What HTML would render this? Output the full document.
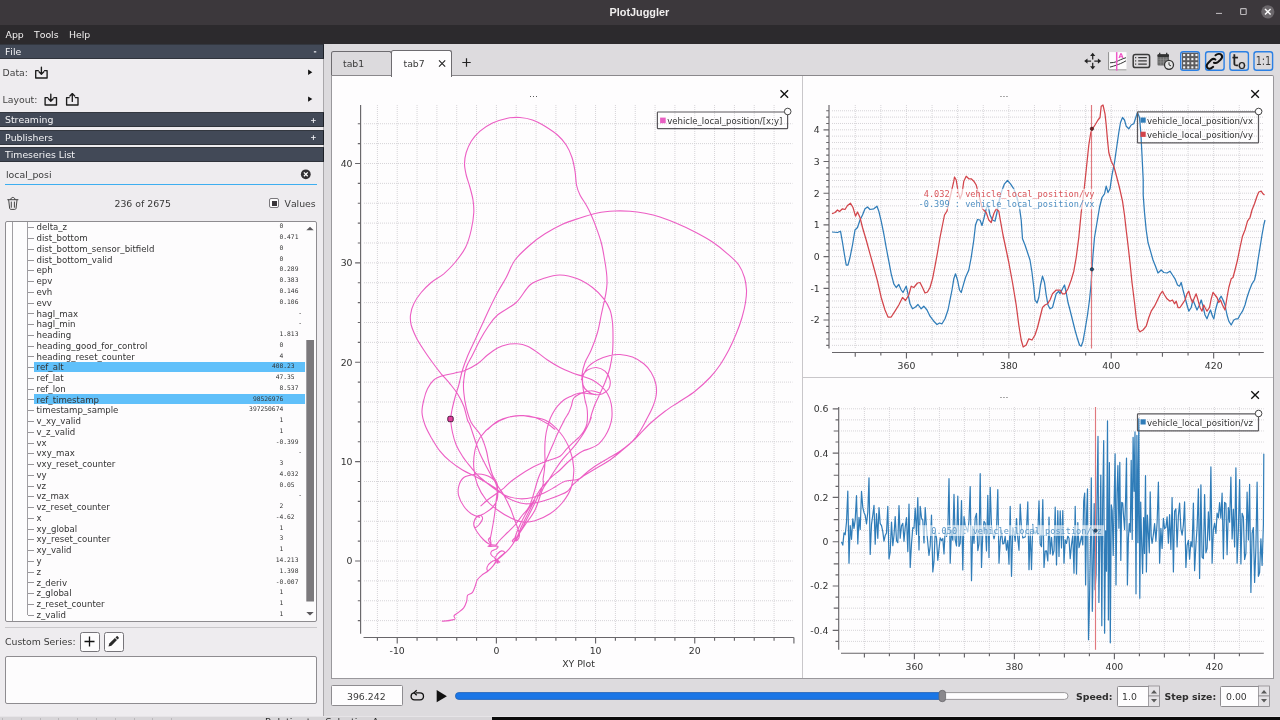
<!DOCTYPE html>
<html lang="en"><head><meta charset="utf-8"><title>PlotJuggler</title>
<style>
html,body{margin:0;padding:0;}
body{width:1280px;height:720px;overflow:hidden;position:relative;background:#eeecef;
 font-family:"DejaVu Sans","Liberation Sans",sans-serif;font-size:9.33px;color:#333;line-height:1;font-kerning:none;}
div,span{box-sizing:border-box;}
.abs{position:absolute;}
#titlebar{position:absolute;left:0;top:0;width:1280px;height:25px;background:#3c383c;}
#title{position:absolute;left:539.400px;width:200px;top:7px;text-align:center;color:#f1efef;font-weight:bold;font-size:10.900px;font-family:"Liberation Sans","DejaVu Sans",sans-serif;}
#menubar{position:absolute;left:0;top:25px;width:1280px;height:18.5px;background:#2c2a2d;color:#f2f0f0;}
#menubar span{position:absolute;top:4.6px;font-size:9.33px;}
.hdr{position:absolute;left:0;width:323.600px;height:15px;background:#424957;border-top:1px solid #33373f;border-bottom:1px solid #2f333b;border-right:1.200px solid #1d2026;color:#f4f4f6;}
.hdr span{position:absolute;left:5px;top:2px;font-size:9.33px;}
.hdr b{position:absolute;right:6px;top:3.500px;font-weight:bold;font-size:7.500px;color:#f4f4f8;}
.lbl{position:absolute;font-size:9.33px;color:#444;white-space:nowrap;}
#leftpanel{position:absolute;left:0;top:43.5px;width:324px;height:673px;background:#eeecef;border-right:1px solid #a9a7aa;}
#splitter{position:absolute;left:324px;top:43.5px;width:7.500px;height:673px;background:#dcdadd;}
#tree{position:absolute;left:5px;top:221px;width:311.5px;height:400.5px;background:#fdfcfd;border:1px solid #8e8c90;border-radius:2px;}
.tl{position:absolute;left:36.5px;height:10.75px;line-height:10.75px;font-size:8.6px;color:#333;white-space:nowrap;}
.tv{position:absolute;height:10.75px;line-height:8.600px;font-size:6.300px;font-family:"DejaVu Sans Mono","Liberation Mono",monospace;color:#333;white-space:pre;}
.br{position:absolute;left:27.500px;width:6.300px;height:1px;background:#98969a;}
.sel{position:absolute;left:34px;width:270.5px;height:10.100px;background:#60c0fa;}
#custom{position:absolute;left:5px;top:655.800px;width:311.5px;height:48.5px;background:#fdfcfd;border:1px solid #8e8c90;border-radius:2px;}
.btn{position:absolute;width:20px;height:20px;background:#fdfcfd;border:1px solid #77757a;border-radius:2.5px;}
svg{position:absolute;overflow:visible;}
svg text{font-kerning:none;font-family:"DejaVu Sans","Liberation Sans",sans-serif;}
#right{position:absolute;left:331.5px;top:43.5px;width:948.5px;height:673px;background:#dddbde;}
#plotframe{position:absolute;left:331px;top:75px;width:943px;height:604px;border-radius:0 2px 0 0;background:#fefdfe;border:1px solid #9a989c;border-top-color:#8a888c;}
.tab{position:absolute;font-size:9.33px;color:#3a3a3a;}
#root{position:absolute;left:0;top:0;width:1280px;height:720px;will-change:transform;}

</style></head>
<body><div id="root">
<div id="titlebar">
 <div id="title">PlotJuggler</div>
 <svg style="left:1200px;top:0" width="80" height="25" viewBox="0 0 80 25">
  <path d="M16 13.400h6" stroke="#d2cfd2" stroke-width="0.900" fill="none"/>
  <rect x="40.600" y="8.700" width="5.600" height="5.800" rx="0.800" stroke="#b9b6b9" stroke-width="1.200" fill="none"/>
  <circle cx="67.800" cy="11.800" r="6.600" fill="#6b676b"/>
  <path d="M65 9l5.600 5.600M70.600 9l-5.600 5.600" stroke="#fff" stroke-width="1.400" fill="none"/>
 </svg>
</div>
<div id="menubar"><span style="left:5.5px">App</span><span style="left:34px">Tools</span><span style="left:69px">Help</span></div>

<div id="leftpanel"></div>
<div id="splitter"></div>
<div class="hdr" style="top:43.5px"><span>File</span><b>-</b></div>
<div class="lbl" style="left:2.5px;top:67.5px">Data:</div>
<div class="lbl" style="left:2.5px;top:94.5px">Layout:</div>
<svg style="left:0;top:43px" width="330" height="80" viewBox="0 43 330 80" fill="none" stroke="#1c1c1c" stroke-width="1.350" stroke-linecap="round" stroke-linejoin="round">
 <!-- data import icon -->
 <path d="M38.3 70.6h-2.6v7.4h11.4v-7.4h-2.6"/><path d="M41.4 67.2v6.8M39 71.8l2.4 2.4 2.4-2.4"/>
 <!-- layout import -->
 <path d="M47.7 97.6h-2.6v7.4h11.4v-7.4h-2.6"/><path d="M50.8 94.2v6.8M48.4 98.8l2.4 2.4 2.4-2.4"/>
 <!-- layout export -->
 <path d="M69.2 97.6h-2.6v7.4h11.4v-7.4h-2.6"/><path d="M72.3 101.4v-7.6M69.9 96l2.4-2.4 2.4 2.4"/>
 <!-- arrows -->
 <path d="M308.100 69.500v5.400l4.200-2.700z" fill="#111" stroke="none"/>
 <path d="M308.100 96.400v5.400l4.200-2.700z" fill="#111" stroke="none"/>
</svg>
<div class="hdr" style="top:112.2px"><span>Streaming</span><b>+</b></div>
<div class="hdr" style="top:129.5px"><span>Publishers</span><b>+</b></div>
<div class="hdr" style="top:146.8px"><span>Timeseries List</span></div>
<div class="lbl" style="left:6px;top:169.5px;color:#3a3a3a">local_posi</div>
<div class="abs" style="left:5px;top:183.7px;width:311.5px;height:1.4px;background:#3daef0"></div>
<svg style="left:298px;top:167px" width="16" height="16" viewBox="0 0 16 16">
 <circle cx="7.8" cy="7.3" r="4.9" fill="#322f32"/><path d="M5.9 5.4l3.8 3.8M9.7 5.4l-3.8 3.8" stroke="#fff" stroke-width="1.3"/>
</svg>
<svg style="left:0px;top:190px" width="24" height="24" viewBox="0 190 24 24" fill="none" stroke="#3c3c3c" stroke-width="0.950" stroke-linecap="round">
 <path d="M7.700 199.700h10.300M10.700 199.500c0-2.900 4.300-2.900 4.300 0M8.700 200l.9 8c.1 1 .6 1.400 1.500 1.400h3.500c.9 0 1.400-.4 1.500-1.400l.9-8M11.300 202v5.300M14.400 202v5.300"/>
</svg>
<div class="lbl" style="left:114.5px;top:198.5px;color:#3a3a3a">236 of 2675</div>
<div class="abs" style="left:269px;top:198px;width:10.400px;height:10.400px;border:1px solid #7a787c;border-radius:2px;background:#fdfcfd"></div>
<div class="abs" style="left:272px;top:201px;width:5px;height:5px;background:#3a363a"></div>
<div class="lbl" style="left:284.500px;top:198.500px;color:#3a3a3a">Values</div>
<div id="tree"></div>
<div class="abs" style="left:11.900px;top:222px;width:1.300px;height:399px;background:#a09ea2"></div>
<div class="abs" style="left:26.600px;top:222px;width:1.300px;height:392.500px;background:#a09ea2"></div>
<div class="br" style="top:227.30px"></div>
<div class="tl" style="top:222.42px">delta_z</div>
<div class="tv" style="top:222.42px;left:279.50px">0</div>
<div class="br" style="top:238.06px"></div>
<div class="tl" style="top:233.18px">dist_bottom</div>
<div class="tv" style="top:233.18px;left:279.50px">0.471</div>
<div class="br" style="top:248.82px"></div>
<div class="tl" style="top:243.94px">dist_bottom_sensor_bitfield</div>
<div class="tv" style="top:243.94px;left:279.50px">0</div>
<div class="br" style="top:259.58px"></div>
<div class="tl" style="top:254.70px">dist_bottom_valid</div>
<div class="tv" style="top:254.70px;left:279.50px">0</div>
<div class="br" style="top:270.34px"></div>
<div class="tl" style="top:265.46px">eph</div>
<div class="tv" style="top:265.46px;left:279.50px">0.289</div>
<div class="br" style="top:281.10px"></div>
<div class="tl" style="top:276.22px">epv</div>
<div class="tv" style="top:276.22px;left:279.50px">0.383</div>
<div class="br" style="top:291.86px"></div>
<div class="tl" style="top:286.98px">evh</div>
<div class="tv" style="top:286.98px;left:279.50px">0.146</div>
<div class="br" style="top:302.62px"></div>
<div class="tl" style="top:297.74px">evv</div>
<div class="tv" style="top:297.74px;left:279.50px">0.106</div>
<div class="br" style="top:313.38px"></div>
<div class="tl" style="top:308.50px">hagl_max</div>
<div class="tv" style="top:308.50px;left:298.20px">-</div>
<div class="br" style="top:324.14px"></div>
<div class="tl" style="top:319.26px">hagl_min</div>
<div class="tv" style="top:319.26px;left:298.20px">-</div>
<div class="br" style="top:334.90px"></div>
<div class="tl" style="top:330.02px">heading</div>
<div class="tv" style="top:330.02px;left:279.50px">1.813</div>
<div class="br" style="top:345.66px"></div>
<div class="tl" style="top:340.78px">heading_good_for_control</div>
<div class="tv" style="top:340.78px;left:279.50px">0</div>
<div class="br" style="top:356.42px"></div>
<div class="tl" style="top:351.54px">heading_reset_counter</div>
<div class="tv" style="top:351.54px;left:279.50px">4</div>
<div class="sel" style="top:361.75px"></div>
<div class="br" style="top:367.18px"></div>
<div class="tl" style="top:362.30px">ref_alt</div>
<div class="tv" style="top:362.30px;left:271.90px">408.23</div>
<div class="br" style="top:377.94px"></div>
<div class="tl" style="top:373.06px">ref_lat</div>
<div class="tv" style="top:373.06px;left:275.70px">47.35</div>
<div class="br" style="top:388.70px"></div>
<div class="tl" style="top:383.82px">ref_lon</div>
<div class="tv" style="top:383.82px;left:279.50px">8.537</div>
<div class="sel" style="top:394.03px"></div>
<div class="br" style="top:399.46px"></div>
<div class="tl" style="top:394.58px">ref_timestamp</div>
<div class="tv" style="top:394.58px;left:252.90px">98526976</div>
<div class="br" style="top:410.22px"></div>
<div class="tl" style="top:405.34px">timestamp_sample</div>
<div class="tv" style="top:405.34px;left:249.10px">397250674</div>
<div class="br" style="top:420.98px"></div>
<div class="tl" style="top:416.10px">v_xy_valid</div>
<div class="tv" style="top:416.10px;left:279.50px">1</div>
<div class="br" style="top:431.74px"></div>
<div class="tl" style="top:426.86px">v_z_valid</div>
<div class="tv" style="top:426.86px;left:279.50px">1</div>
<div class="br" style="top:442.50px"></div>
<div class="tl" style="top:437.62px">vx</div>
<div class="tv" style="top:437.62px;left:275.70px">-0.399</div>
<div class="br" style="top:453.26px"></div>
<div class="tl" style="top:448.38px">vxy_max</div>
<div class="tv" style="top:448.38px;left:298.20px">-</div>
<div class="br" style="top:464.02px"></div>
<div class="tl" style="top:459.14px">vxy_reset_counter</div>
<div class="tv" style="top:459.14px;left:279.50px">3</div>
<div class="br" style="top:474.78px"></div>
<div class="tl" style="top:469.90px">vy</div>
<div class="tv" style="top:469.90px;left:279.50px">4.032</div>
<div class="br" style="top:485.54px"></div>
<div class="tl" style="top:480.66px">vz</div>
<div class="tv" style="top:480.66px;left:279.50px">0.05</div>
<div class="br" style="top:496.30px"></div>
<div class="tl" style="top:491.42px">vz_max</div>
<div class="tv" style="top:491.42px;left:298.20px">-</div>
<div class="br" style="top:507.06px"></div>
<div class="tl" style="top:502.18px">vz_reset_counter</div>
<div class="tv" style="top:502.18px;left:279.50px">2</div>
<div class="br" style="top:517.82px"></div>
<div class="tl" style="top:512.94px">x</div>
<div class="tv" style="top:512.94px;left:275.70px">-4.62</div>
<div class="br" style="top:528.58px"></div>
<div class="tl" style="top:523.70px">xy_global</div>
<div class="tv" style="top:523.70px;left:279.50px">1</div>
<div class="br" style="top:539.34px"></div>
<div class="tl" style="top:534.46px">xy_reset_counter</div>
<div class="tv" style="top:534.46px;left:279.50px">3</div>
<div class="br" style="top:550.10px"></div>
<div class="tl" style="top:545.22px">xy_valid</div>
<div class="tv" style="top:545.22px;left:279.50px">1</div>
<div class="br" style="top:560.86px"></div>
<div class="tl" style="top:555.98px">y</div>
<div class="tv" style="top:555.98px;left:275.70px">14.213</div>
<div class="br" style="top:571.62px"></div>
<div class="tl" style="top:566.74px">z</div>
<div class="tv" style="top:566.74px;left:279.50px">1.398</div>
<div class="br" style="top:582.38px"></div>
<div class="tl" style="top:577.50px">z_deriv</div>
<div class="tv" style="top:577.50px;left:275.70px">-0.007</div>
<div class="br" style="top:593.14px"></div>
<div class="tl" style="top:588.26px">z_global</div>
<div class="tv" style="top:588.26px;left:279.50px">1</div>
<div class="br" style="top:603.90px"></div>
<div class="tl" style="top:599.02px">z_reset_counter</div>
<div class="tv" style="top:599.02px;left:279.50px">1</div>
<div class="br" style="top:614.66px"></div>
<div class="tl" style="top:609.78px">z_valid</div>
<div class="tv" style="top:609.78px;left:279.50px">1</div>
<!-- scrollbar -->
<svg style="left:304px;top:222px" width="12" height="399" viewBox="304 222 12 399">
 <path d="M306.300 230.300h7.400l-3.700-3.600z" fill="#5a585c"/>
 <rect x="306.300" y="340" width="7.700" height="261.500" fill="#7b797c"/>
 <path d="M306.300 612h7.400l-3.700 3.600z" fill="#5a585c"/>
</svg>
<div class="abs" style="left:5px;top:626.500px;width:311.500px;height:1px;background:#c9c7ca"></div>
<div class="lbl" style="left:5px;top:637px;color:#3a3a3a">Custom Series:</div>
<div class="btn" style="left:79.500px;top:631.500px"></div>
<div class="btn" style="left:103.500px;top:631.500px"></div>
<svg style="left:79px;top:631px" width="46" height="21" viewBox="79 631 46 21">
 <path d="M84.500 641.500h10M89.500 636.500v10" stroke="#111" stroke-width="1.300" fill="none"/>
 <path d="M108.500 646.500l.8-2.900 5.600-5.600 2.100 2.100-5.600 5.600z" fill="#2a2a2a"/><path d="M115.500 637.400l1-1c.4-.4.900-.4 1.300 0l.8.800c.4.400.4.900 0 1.300l-1 1z" fill="#2a2a2a"/>
</svg>
<div id="custom"></div>

<div id="right"></div>
<!-- tabs -->
<div class="abs" style="left:331px;top:50.600px;width:60.500px;height:25.400px;background:#dcdadd;border:1px solid #6e6c70;border-bottom:none;border-radius:2.500px 2.500px 0 0"></div>
<div id="plotframe"></div>
<div class="abs" style="left:391px;top:50.200px;width:61px;height:27px;background:#fefdfe;border:1px solid #6e6c70;border-bottom:none;border-radius:2.500px 2.500px 0 0"></div>
<div class="tab" style="left:343px;top:58.800px">tab1</div>
<div class="tab" style="left:403.500px;top:58.800px">tab7</div>
<svg style="left:430px;top:50px" width="50" height="26" viewBox="430 50 50 26" fill="none" stroke="#222" stroke-width="1.100">
 <path d="M439 60.400l6.200 6.200M445.200 60.400l-6.200 6.200"/>
 <path d="M462.300 62.500h8.400M466.500 58.300v8.400" stroke-width="1.200"/>
</svg>
<!-- toolbar -->
<svg style="left:1080px;top:48px" width="200" height="26" viewBox="1080 48 200 26">
 <!-- move -->
 <g stroke="#2a2a2a" stroke-width="1.300" fill="none">
  <path d="M1086.500 61.100h4.600M1094.300 61.100h4.600M1092.700 55v4.600M1092.700 62.700v4.600"/>
 </g>
 <path d="M1084.200 61.100l3.300-2.600v5.200zM1101.200 61.100l-3.300-2.600v5.200zM1092.700 52.800l-2.600 3.300h5.200zM1092.700 69.500l-2.600-3.300h5.200z" fill="#222"/>
 <!-- chart icon -->
 <rect x="1108.100" y="52.100" width="18.400" height="18.500" fill="#fdfdfd"/>
 <path d="M1108.600 52.100v17.800h17.900" stroke="#8a8a8a" stroke-width="1" fill="none"/>
 <path d="M1110 62.800c3-.2 4.500-.3 6.500-1.200s5.500-2.700 9.500-3.900M1110 67.100c3-.8 4.500-1.300 6.500-2s5.500-1.900 9.500-4.300" stroke="#333" stroke-width="1" fill="none"/>
 <path d="M1116.700 52.100v18.500" stroke="#ee5ac8" stroke-width="1.500"/>
 <text x="1118.600" y="57.500" font-size="6.500" font-weight="bold" fill="#ee4fc4">A</text>
 <!-- list icon -->
 <rect x="1133.200" y="54.500" width="16.400" height="13.100" rx="2.200" fill="none" stroke="#3a3a3a" stroke-width="1.500"/>
 <path d="M1135.100 57.700h1.100M1138.200 57.700h8.600M1135.100 60.900h1.100M1138.200 60.900h8.600M1135.100 64.100h1.100M1138.200 64.100h8.600" stroke="#3a3a3a" stroke-width="1.300"/>
 <!-- calendar clock -->
 <rect x="1157.500" y="54.200" width="11.500" height="11.300" rx="1" fill="#6a6a6a"/>
 <rect x="1157.500" y="54.200" width="11.500" height="2.800" rx="1" fill="#333"/>
 <path d="M1159.700 52.800v2.500M1166.700 52.800v2.500" stroke="#333" stroke-width="1.300"/>
 <path d="M1158.300 59.300h9.800M1158.300 62h9.800M1160.800 57.300v7.800M1163.500 57.300v7.800M1166.200 57.300v7.800" stroke="#999" stroke-width="0.600"/>
 <circle cx="1169" cy="64.800" r="4.500" fill="#e6e6e6" stroke="#333" stroke-width="1.300"/>
 <path d="M1169 62.300v2.600l2 1" stroke="#333" stroke-width="1" fill="none"/>
 <!-- toggle buttons -->
 <g fill="#dbd9dc" stroke="#2b80e4" stroke-width="1.400">
  <rect x="1180.700" y="51.700" width="18.700" height="18.600" rx="2.500"/>
  <rect x="1205.600" y="51.700" width="18.500" height="18.600" rx="2.500"/>
  <rect x="1229.900" y="51.700" width="18.500" height="18.600" rx="2.500"/>
  <rect x="1254" y="51.700" width="18.600" height="18.600" rx="2.500"/>
 </g>
 <!-- grid -->
 <rect x="1182" y="52.800" width="16.400" height="16.400" fill="#5c5c5e"/>
 <g fill="#f4f4f4">
  <rect x="1183.100" y="54" width="2.100" height="2.100"/><rect x="1187.200" y="54" width="2.100" height="2.100"/><rect x="1191.300" y="54" width="2.100" height="2.100"/><rect x="1195.400" y="54" width="2.100" height="2.100"/>
  <rect x="1183.100" y="58.100" width="2.100" height="2.100"/><rect x="1187.200" y="58.100" width="2.100" height="2.100"/><rect x="1191.300" y="58.100" width="2.100" height="2.100"/><rect x="1195.400" y="58.100" width="2.100" height="2.100"/>
  <rect x="1183.100" y="62.200" width="2.100" height="2.100"/><rect x="1187.200" y="62.200" width="2.100" height="2.100"/><rect x="1191.300" y="62.200" width="2.100" height="2.100"/><rect x="1195.400" y="62.200" width="2.100" height="2.100"/>
  <rect x="1183.100" y="66.300" width="2.100" height="2.100"/><rect x="1187.200" y="66.300" width="2.100" height="2.100"/><rect x="1191.300" y="66.300" width="2.100" height="2.100"/><rect x="1195.400" y="66.300" width="2.100" height="2.100"/>
 </g>
 <!-- link -->
 <g stroke="#111" stroke-width="2" fill="none" stroke-linecap="round">
  <path d="M1215.500 55.300C1217 54.200 1220 53.300 1221.500 55C1223 56.700 1222 58.300 1220.500 59.800L1218 62C1216.800 63 1215.300 63.200 1213.900 62.700"/>
  <path d="M1215.400 59.500C1214 58.600 1212.500 58.800 1211.300 59.800L1208.200 63C1206.700 64.600 1206.200 66.600 1207.600 68C1209.200 69.500 1211.500 68.300 1213.200 66.800"/>
 </g>
 <!-- t0 -->
 <text x="1232.300" y="65.500" font-size="15.300" fill="#222" stroke="#222" stroke-width="0.300">t</text>
 <text x="1238" y="68.600" font-size="12.800" fill="#222" stroke="#222" stroke-width="0.200">o</text>
 <!-- 1:1 -->
 <text x="1255.700" y="65.200" font-size="11.800" fill="#3a3a3a" textLength="15.600" lengthAdjust="spacingAndGlyphs">1:1</text>
</svg>
<!-- plot separators -->
<div class="abs" style="left:802px;top:76px;width:1px;height:602px;background:#c9c7ca"></div>
<div class="abs" style="left:803px;top:377px;width:470px;height:1px;background:#c9c7ca"></div>
<svg id="xy" style="left:0;top:0" width="803" height="680" viewBox="0 0 803 680">
<path d="M377.40 105.0V633.5M397.23 105.0V633.5M417.06 105.0V633.5M436.90 105.0V633.5M456.73 105.0V633.5M476.57 105.0V633.5M496.40 105.0V633.5M516.23 105.0V633.5M536.07 105.0V633.5M555.90 105.0V633.5M575.74 105.0V633.5M595.57 105.0V633.5M615.40 105.0V633.5M635.24 105.0V633.5M655.07 105.0V633.5M674.91 105.0V633.5M694.74 105.0V633.5M714.57 105.0V633.5M734.41 105.0V633.5M754.24 105.0V633.5M774.08 105.0V633.5M364.0 620.63H792.5M364.0 600.75H792.5M364.0 580.88H792.5M364.0 561.00H792.5M364.0 541.12H792.5M364.0 521.25H792.5M364.0 501.37H792.5M364.0 481.50H792.5M364.0 461.62H792.5M364.0 441.74H792.5M364.0 421.87H792.5M364.0 401.99H792.5M364.0 382.12H792.5M364.0 362.24H792.5M364.0 342.36H792.5M364.0 322.49H792.5M364.0 302.61H792.5M364.0 282.74H792.5M364.0 262.86H792.5M364.0 242.98H792.5M364.0 223.11H792.5M364.0 203.23H792.5M364.0 183.36H792.5M364.0 163.48H792.5M364.0 143.60H792.5M364.0 123.73H792.5" stroke="#d6d4d8" stroke-width="1" stroke-dasharray="1 1" fill="none"/>
<path d="M360.6 105.0V633.8M363.5 637.5H793.8M377.40 637.5v3.2M397.23 637.5v6M417.06 637.5v3.2M436.90 637.5v3.2M456.73 637.5v3.2M476.57 637.5v3.2M496.40 637.5v6M516.23 637.5v3.2M536.07 637.5v3.2M555.90 637.5v3.2M575.74 637.5v3.2M595.57 637.5v6M615.40 637.5v3.2M635.24 637.5v3.2M655.07 637.5v3.2M674.91 637.5v3.2M694.74 637.5v6M714.57 637.5v3.2M734.41 637.5v3.2M754.24 637.5v3.2M774.08 637.5v3.2M793.91 637.5v6M360.6 620.63h-2.8M360.6 600.75h-2.8M360.6 580.88h-2.8M360.6 561.00h-5.5M360.6 541.12h-2.8M360.6 521.25h-2.8M360.6 501.37h-2.8M360.6 481.50h-2.8M360.6 461.62h-5.5M360.6 441.74h-2.8M360.6 421.87h-2.8M360.6 401.99h-2.8M360.6 382.12h-2.8M360.6 362.24h-5.5M360.6 342.36h-2.8M360.6 322.49h-2.8M360.6 302.61h-2.8M360.6 282.74h-2.8M360.6 262.86h-5.5M360.6 242.98h-2.8M360.6 223.11h-2.8M360.6 203.23h-2.8M360.6 183.36h-2.8M360.6 163.48h-5.5M360.6 143.60h-2.8M360.6 123.73h-2.8" stroke="#68666a" stroke-width="1.15" fill="none"/>
<text x="397.2" y="654.3" font-size="9.33" text-anchor="middle" fill="#333">-10</text>
<text x="496.4" y="654.3" font-size="9.33" text-anchor="middle" fill="#333">0</text>
<text x="595.6" y="654.3" font-size="9.33" text-anchor="middle" fill="#333">10</text>
<text x="694.7" y="654.3" font-size="9.33" text-anchor="middle" fill="#333">20</text>
<text x="352.5" y="564.4" font-size="9.33" text-anchor="end" fill="#333">0</text>
<text x="352.5" y="465.0" font-size="9.33" text-anchor="end" fill="#333">10</text>
<text x="352.5" y="365.6" font-size="9.33" text-anchor="end" fill="#333">20</text>
<text x="352.5" y="266.3" font-size="9.33" text-anchor="end" fill="#333">30</text>
<text x="352.5" y="166.9" font-size="9.33" text-anchor="end" fill="#333">40</text>
<text x="578.5" y="667.3" font-size="9.33" text-anchor="middle" fill="#333">XY Plot</text>
<text x="533.500" y="97.100" font-size="9.33" text-anchor="middle" fill="#555">...</text>
<path d="M581.2 380.0C582.3 377.9 584.8 370.8 587.5 367.5C590.2 364.2 593.8 362.0 597.5 360.0C601.2 358.0 606.2 356.4 610.0 355.5C613.8 354.6 616.2 354.2 620.0 354.5C623.8 354.8 628.5 355.5 632.5 357.0C636.5 358.5 640.6 361.2 643.8 363.8C646.9 366.3 649.2 369.2 651.2 372.5C653.2 375.8 654.9 380.0 655.8 383.8C656.6 387.5 656.8 391.0 656.2 395.0C655.7 399.0 654.2 403.3 652.5 407.5C650.8 411.7 648.3 416.0 646.2 420.0C644.2 424.0 642.3 427.7 640.0 431.2C637.7 434.8 635.4 438.1 632.5 441.2C629.6 444.4 626.2 446.9 622.5 450.0C618.8 453.1 614.2 457.1 610.0 460.0C605.8 462.9 601.7 465.0 597.5 467.5C593.3 470.0 588.3 473.0 585.0 475.0C581.7 477.0 580.8 478.5 577.5 479.5C574.2 480.5 568.8 480.0 565.0 481.2C561.2 482.5 558.3 485.1 555.0 487.0C551.7 488.9 548.8 490.8 545.0 492.5C541.2 494.2 536.7 496.5 532.5 497.5C528.3 498.5 524.2 499.0 520.0 498.8C515.8 498.5 511.5 497.7 507.5 496.2C503.5 494.8 499.8 492.3 496.2 490.0C492.7 487.7 489.4 485.0 486.2 482.5C483.1 480.0 480.2 477.7 477.5 475.0C474.8 472.3 472.5 469.4 470.0 466.2C467.5 463.1 464.8 459.8 462.5 456.2C460.2 452.7 457.9 449.0 456.2 445.0C454.6 441.0 453.4 436.8 452.5 432.5C451.6 428.2 450.8 423.0 450.8 419.2C450.7 415.5 451.3 413.6 452.0 410.0C452.7 406.4 453.9 401.7 455.0 397.5C456.1 393.3 457.5 389.6 458.8 385.0C460.0 380.4 461.0 374.8 462.5 370.0C464.0 365.2 465.4 361.2 467.5 356.2C469.6 351.2 472.5 345.4 475.0 340.0C477.5 334.6 480.0 329.2 482.5 323.8C485.0 318.3 487.5 312.7 490.0 307.5C492.5 302.3 494.8 297.5 497.5 292.5C500.2 287.5 503.3 282.9 506.2 277.5C509.2 272.1 511.0 265.4 515.0 260.0C519.0 254.6 525.0 249.4 530.0 245.0C535.0 240.6 539.6 237.2 545.0 233.8C550.4 230.3 556.7 226.9 562.5 224.2C568.3 221.6 574.2 219.9 580.0 218.0C585.8 216.1 591.7 214.2 597.5 213.0C603.3 211.8 609.6 211.3 615.0 211.0C620.4 210.7 625.0 210.9 630.0 211.2C635.0 211.6 640.0 212.3 645.0 213.2C650.0 214.2 654.6 215.2 660.0 217.0C665.4 218.8 671.7 221.2 677.5 223.8C683.3 226.2 689.2 229.0 695.0 232.0C700.8 235.0 707.1 238.4 712.5 242.0C717.9 245.6 723.1 249.9 727.5 253.8C731.9 257.6 735.9 261.0 738.8 265.0C741.6 269.0 743.2 273.3 744.5 277.5C745.8 281.7 746.3 285.8 746.5 290.0C746.7 294.2 746.2 297.9 745.5 302.5C744.8 307.1 743.5 312.3 742.0 317.5C740.5 322.7 738.5 328.3 736.2 333.8C734.0 339.2 731.5 344.8 728.8 350.0C726.0 355.2 723.1 360.4 720.0 365.0C716.9 369.6 714.2 373.1 710.0 377.5C705.8 381.9 700.0 387.3 695.0 391.2C690.0 395.2 685.0 397.9 680.0 401.2C675.0 404.6 669.8 407.7 665.0 411.2C660.2 414.8 655.4 418.8 651.2 422.5C647.1 426.2 643.3 430.4 640.0 433.8C636.7 437.1 634.6 439.6 631.2 442.5C627.9 445.4 624.0 448.5 620.0 451.2C616.0 454.0 611.7 456.2 607.5 458.8C603.3 461.2 598.8 463.8 595.0 466.2C591.2 468.8 587.7 471.5 585.0 473.8C582.3 476.0 580.8 477.6 578.8 479.5C576.7 481.4 574.4 483.0 572.5 485.0C570.6 487.0 569.6 489.6 567.5 491.2C565.4 492.9 562.9 493.8 560.0 495.0C557.1 496.2 553.8 497.5 550.0 498.8C546.2 500.0 541.7 501.7 537.5 502.5C533.3 503.3 528.8 504.0 525.0 503.8C521.2 503.5 518.3 502.5 515.0 501.2C511.7 500.0 508.1 498.3 505.0 496.2C501.9 494.2 499.4 491.0 496.2 488.8C493.1 486.5 489.8 484.6 486.2 482.5C482.7 480.4 479.0 478.3 475.0 476.2C471.0 474.2 466.7 472.5 462.5 470.0C458.3 467.5 453.8 464.4 450.0 461.2C446.2 458.1 443.1 455.2 440.0 451.2C436.9 447.3 433.8 441.9 431.2 437.5C428.8 433.1 426.5 429.2 425.0 425.0C423.5 420.8 422.2 416.7 422.0 412.5C421.8 408.3 422.8 404.0 423.8 400.0C424.7 396.0 425.8 392.1 427.5 388.8C429.2 385.4 431.2 382.2 433.8 380.0C436.2 377.8 439.0 376.9 442.5 375.8C446.0 374.6 451.2 373.9 455.0 373.0C458.8 372.1 461.2 372.0 465.0 370.5C468.8 369.0 473.8 366.3 477.5 363.8C481.2 361.2 484.2 357.6 487.5 355.0C490.8 352.4 494.2 349.8 497.5 348.0C500.8 346.2 504.2 345.2 507.5 344.5C510.8 343.8 514.2 343.5 517.5 343.8C520.8 344.0 524.2 344.8 527.5 346.2C530.8 347.7 534.2 350.2 537.5 352.5C540.8 354.8 543.8 357.5 547.5 360.0C551.2 362.5 555.8 365.3 560.0 367.5C564.2 369.7 568.8 371.5 572.5 373.0C576.2 374.5 579.2 375.1 582.5 376.2C585.8 377.4 589.4 378.3 592.5 380.0C595.6 381.7 598.8 384.0 601.2 386.2C603.8 388.5 605.8 390.8 607.5 393.8C609.2 396.7 610.5 399.8 611.2 403.8C612.0 407.7 612.2 413.5 611.9 417.5C611.6 421.5 610.5 424.4 609.4 427.5C608.2 430.6 606.8 433.5 605.0 436.2C603.2 439.0 601.0 441.8 598.8 443.8C596.5 445.7 594.0 446.9 591.2 448.1C588.5 449.4 585.2 449.9 582.5 451.2C579.8 452.6 577.5 454.4 575.0 456.2C572.5 458.1 570.0 460.2 567.5 462.5C565.0 464.8 562.5 467.7 560.0 470.0C557.5 472.3 555.0 474.0 552.5 476.2C550.0 478.5 547.1 481.5 545.0 483.8C542.9 486.0 542.1 486.6 540.0 489.8C537.9 492.9 535.0 498.3 532.5 502.5C530.0 506.7 527.3 510.8 525.0 515.0C522.7 519.2 520.4 523.8 518.8 527.5C517.1 531.2 515.6 535.8 515.0 537.5M513.8 541.2C514.4 541.0 516.5 541.0 517.5 540.0C518.5 539.0 519.5 537.1 519.5 535.0C519.5 532.9 518.5 530.4 517.5 527.5C516.5 524.6 515.0 520.8 513.8 517.5C512.5 514.2 511.7 511.2 510.0 507.5C508.3 503.8 505.6 498.3 503.8 495.0C501.9 491.7 500.6 490.4 498.8 487.5C496.9 484.6 494.6 481.0 492.5 477.5C490.4 474.0 488.3 470.2 486.2 466.2C484.2 462.3 481.9 458.1 480.0 453.8C478.1 449.4 476.7 444.8 475.0 440.0C473.3 435.2 471.2 428.3 470.0 425.0C468.8 421.7 468.5 423.1 467.5 420.0C466.5 416.9 465.4 410.6 463.8 406.2C462.1 401.9 459.8 397.5 457.5 393.8C455.2 390.0 452.7 387.1 450.0 383.8C447.3 380.4 444.2 377.3 441.2 373.8C438.3 370.2 435.4 366.5 432.5 362.5C429.6 358.5 426.5 354.2 423.8 350.0C421.0 345.8 418.3 341.7 416.2 337.5C414.2 333.3 412.2 328.8 411.2 325.0C410.3 321.2 410.1 318.5 410.5 315.0C410.9 311.5 412.0 307.5 413.8 303.8C415.5 300.0 418.3 296.0 421.2 292.5C424.2 289.0 427.5 285.6 431.2 282.5C435.0 279.4 439.8 277.1 443.8 273.8C447.7 270.4 451.4 266.9 455.0 262.5C458.6 258.1 462.8 252.9 465.5 247.5C468.2 242.1 469.9 235.8 471.2 230.0C472.6 224.2 473.5 217.5 473.8 212.5C474.0 207.5 473.6 204.2 473.0 200.0C472.4 195.8 471.1 191.7 470.0 187.5C468.9 183.3 467.2 179.0 466.2 175.0C465.3 171.0 464.5 167.5 464.5 163.8C464.5 160.0 465.1 156.2 466.2 152.5C467.4 148.8 469.0 144.8 471.2 141.2C473.5 137.7 476.5 134.3 480.0 131.2C483.5 128.2 487.9 125.2 492.5 123.0C497.1 120.8 502.9 119.2 507.5 118.2C512.1 117.3 515.8 117.2 520.0 117.5C524.2 117.8 528.3 118.5 532.5 120.0C536.7 121.5 540.8 123.8 545.0 126.2C549.2 128.8 554.0 131.9 557.5 135.0C561.0 138.1 563.8 141.2 566.2 145.0C568.7 148.8 570.5 153.1 572.0 157.5C573.5 161.9 574.2 166.7 575.0 171.2C575.8 175.8 575.7 181.0 576.5 185.0C577.3 189.0 578.4 191.7 580.0 195.0C581.6 198.3 584.4 201.7 586.2 205.0C588.1 208.3 589.6 211.2 591.2 215.0C592.9 218.8 594.6 222.9 596.2 227.5C597.9 232.1 599.9 237.5 601.2 242.5C602.6 247.5 603.4 252.5 604.2 257.5C605.1 262.5 606.0 268.1 606.5 272.5C607.0 276.9 607.1 280.2 607.0 283.8C606.9 287.3 606.7 288.5 605.8 293.8C604.8 299.0 602.6 308.5 601.2 315.0C599.9 321.5 599.2 326.7 597.5 332.5C595.8 338.3 593.3 345.0 591.2 350.0C589.2 355.0 586.5 358.3 585.0 362.5C583.5 366.7 582.3 370.8 582.0 375.0C581.7 379.2 582.5 383.3 583.0 387.5C583.5 391.7 584.4 396.7 585.0 400.0C585.6 403.3 586.5 405.0 586.9 407.5C587.3 410.0 587.5 412.3 587.5 415.0C587.5 417.7 587.5 421.0 586.9 423.8C586.2 426.5 585.1 429.0 583.8 431.2C582.4 433.5 580.6 435.5 578.8 437.5C576.9 439.5 574.6 441.1 572.5 443.1C570.4 445.1 568.3 447.2 566.2 449.4C564.2 451.6 562.7 454.5 560.0 456.2C557.3 458.0 553.3 458.8 550.0 460.0C546.7 461.2 543.3 462.3 540.0 463.8C536.7 465.2 533.3 466.9 530.0 468.8C526.7 470.6 523.1 472.9 520.0 475.0C516.9 477.1 514.0 479.1 511.2 481.2C508.5 483.4 506.2 486.0 503.8 488.1C501.2 490.2 499.0 491.8 496.2 493.8C493.5 495.7 490.1 497.9 487.5 500.0C484.9 502.1 481.7 505.2 480.5 506.2M490.0 540.0C490.3 538.3 491.2 534.2 492.0 530.0C492.8 525.8 493.8 520.0 494.5 515.0C495.2 510.0 495.8 505.0 496.2 500.0C496.8 495.0 498.1 489.2 497.5 485.0C496.9 480.8 494.0 478.8 492.5 475.0C491.0 471.2 489.8 466.7 488.8 462.5C487.7 458.3 487.6 454.6 486.2 450.0C484.9 445.4 483.0 439.6 480.5 435.0C478.0 430.4 473.6 427.1 471.2 422.5C468.9 417.9 467.5 412.5 466.2 407.5C465.0 402.5 464.2 397.1 463.8 392.5C463.3 387.9 463.3 384.2 463.8 380.0C464.2 375.8 464.8 371.7 466.2 367.5C467.7 363.3 470.2 359.6 472.5 355.0C474.8 350.4 477.5 344.6 480.0 340.0C482.5 335.4 484.6 331.7 487.5 327.5C490.4 323.3 492.7 319.2 497.5 315.0C502.3 310.8 510.8 307.5 516.2 302.5C521.7 297.5 525.2 289.1 530.0 285.0C534.8 280.9 540.0 279.7 545.0 278.0C550.0 276.3 554.6 274.9 560.0 275.0C565.4 275.1 572.1 276.7 577.5 278.8C582.9 280.8 588.1 284.2 592.5 287.5C596.9 290.8 600.8 295.0 603.8 298.8C606.7 302.5 608.5 306.0 610.0 310.0C611.5 314.0 612.0 317.9 612.5 322.5C613.0 327.1 613.0 332.5 613.0 337.5C613.0 342.5 613.0 347.5 612.5 352.5C612.0 357.5 611.2 362.5 610.0 367.5C608.8 372.5 606.9 377.7 605.0 382.5C603.1 387.3 600.6 392.1 598.8 396.2C596.9 400.4 595.2 403.5 593.8 407.5C592.3 411.5 590.4 418.3 590.0 420.0C589.6 421.7 591.7 416.5 591.2 417.5C590.8 418.5 589.0 423.3 587.5 426.2C586.0 429.2 584.4 432.1 582.5 435.0C580.6 437.9 578.5 440.8 576.2 443.8C574.0 446.7 571.2 449.6 568.8 452.5C566.2 455.4 563.5 458.3 561.2 461.2C559.0 464.2 557.1 466.9 555.0 470.0C552.9 473.1 550.8 476.7 548.8 480.0C546.7 483.3 544.8 484.8 542.5 489.8C540.2 494.8 537.9 504.1 535.0 510.0C532.1 515.9 527.9 520.6 525.0 525.0C522.1 529.4 519.4 533.5 517.5 536.2C515.6 539.0 514.4 540.4 513.8 541.2M582.5 375.0C583.3 374.2 585.2 371.2 587.5 370.0C589.8 368.8 593.3 367.3 596.2 367.5C599.2 367.7 602.7 369.2 605.0 371.2C607.3 373.3 609.4 377.1 610.0 380.0C610.6 382.9 610.0 386.5 608.8 388.8C607.5 391.0 604.8 392.8 602.5 393.8C600.2 394.7 597.5 394.9 595.0 394.5C592.5 394.1 589.5 392.8 587.5 391.2C585.5 389.7 583.8 387.7 583.0 385.0C582.2 382.3 582.6 376.7 582.5 375.0M487.5 429.5C489.2 428.1 493.8 423.4 497.5 421.2C501.2 419.1 505.8 417.7 510.0 416.8C514.2 415.8 518.3 415.4 522.5 415.5C526.7 415.6 530.8 416.1 535.0 417.5C539.2 418.9 544.2 421.8 547.5 423.8C550.8 425.8 553.8 428.5 555.0 429.5M522.5 415.5C526.2 416.2 538.8 417.2 545.0 420.0C551.2 422.8 555.8 427.5 560.0 432.5C564.2 437.5 567.7 444.0 570.0 450.0C572.3 456.0 573.5 462.5 573.8 468.8C574.0 475.0 573.1 481.9 571.2 487.5C569.4 493.1 566.0 498.1 562.5 502.5C559.0 506.9 554.6 510.7 550.0 513.8C545.4 516.8 539.6 519.4 535.0 520.8C530.4 522.1 526.7 522.5 522.5 522.0C518.3 521.5 514.2 519.5 510.0 517.5C505.8 515.5 501.5 512.9 497.5 510.0C493.5 507.1 489.6 504.2 486.2 500.0C482.9 495.8 479.6 490.4 477.5 485.0C475.4 479.6 474.2 473.3 473.8 467.5C473.3 461.7 474.0 455.0 475.0 450.0C476.0 445.0 477.1 441.7 480.0 437.5C482.9 433.3 487.9 428.3 492.5 425.0C497.1 421.7 502.5 419.1 507.5 417.5C512.5 415.9 520.0 415.8 522.5 415.5M480.0 517.5C478.5 516.9 474.0 515.6 471.2 513.8C468.5 511.9 465.8 509.2 463.8 506.2C461.7 503.3 459.6 499.6 458.8 496.2C457.9 492.9 457.9 489.4 458.8 486.2C459.6 483.1 461.0 479.5 463.8 477.5C466.5 475.5 471.5 474.7 475.0 474.2C478.5 473.8 481.9 474.0 485.0 475.0C488.1 476.0 491.7 477.5 493.8 480.0C495.8 482.5 497.0 486.7 497.5 490.0C498.0 493.3 497.8 497.1 497.0 500.0C496.2 502.9 494.7 505.2 492.5 507.5C490.3 509.8 486.5 512.1 483.8 513.8C481.0 515.4 477.9 516.0 476.2 517.5C474.6 519.0 474.0 520.8 473.8 522.5C473.5 524.2 474.2 527.1 475.0 527.5C475.8 527.9 477.5 526.5 478.8 525.0C480.0 523.5 482.2 520.3 482.5 518.8C482.8 517.2 481.5 515.7 480.5 515.5C479.5 515.3 477.4 515.9 476.2 517.5C475.1 519.1 473.5 522.5 473.8 525.0C474.0 527.5 475.8 530.0 477.5 532.5C479.2 535.0 481.7 538.0 483.8 540.0C485.8 542.0 487.9 543.7 490.0 544.5C492.1 545.3 495.2 544.9 496.2 545.0M496.2 545.0C496.9 544.2 498.1 542.1 500.0 540.0C501.9 537.9 505.0 535.0 507.5 532.5C510.0 530.0 512.5 527.9 515.0 525.0C517.5 522.1 520.0 518.3 522.5 515.0C525.0 511.7 527.4 511.0 530.0 505.0C532.6 499.0 536.0 484.8 538.1 478.8C540.2 472.7 541.1 471.9 542.5 468.8C543.9 465.6 545.0 462.9 546.2 460.0C547.5 457.1 548.8 454.2 550.0 451.2C551.2 448.3 552.5 445.4 553.8 442.5C555.0 439.6 556.2 436.5 557.5 433.8C558.8 431.0 560.0 428.8 561.2 426.2C562.5 423.8 563.8 421.0 565.0 418.8C566.2 416.5 567.7 414.7 568.8 412.5C569.8 410.3 570.7 408.0 571.5 405.6C572.3 403.2 572.1 400.1 573.8 398.0C575.4 395.9 578.3 394.5 581.2 393.2C584.2 392.0 588.1 390.8 591.2 390.8C594.4 390.7 598.5 392.6 600.0 393.0M595.0 394.5C592.5 394.2 584.0 392.7 580.0 393.0C576.0 393.3 574.0 395.1 571.2 396.2C568.5 397.4 566.0 398.3 563.8 400.0C561.5 401.7 559.4 404.0 557.5 406.2C555.6 408.5 554.0 411.0 552.5 413.8C551.0 416.5 549.8 419.4 548.8 422.5C547.7 425.6 546.9 429.2 546.2 432.5C545.6 435.8 545.2 439.2 545.0 442.5C544.8 445.8 544.8 449.4 544.8 452.5C544.8 455.6 545.1 458.3 545.0 461.2C544.9 464.2 544.7 467.1 544.4 470.0C544.1 472.9 543.6 475.5 543.1 478.8C542.6 482.0 545.3 480.4 541.2 489.8C537.2 499.1 523.0 526.6 518.8 535.0C514.5 543.4 516.0 539.2 515.5 540.0M491.0 545.1C490.5 545.3 487.7 546.1 488.0 546.3C488.4 546.5 491.3 546.3 492.9 546.3C494.5 546.3 497.1 545.9 497.8 546.3C498.4 546.7 497.8 547.8 496.8 548.6C495.8 549.4 492.9 550.0 491.9 550.9C491.0 551.9 490.5 553.4 491.0 554.4C491.4 555.5 493.7 557.5 494.8 557.3C496.0 557.2 496.6 554.5 497.8 553.5C498.9 552.4 500.5 551.1 501.6 550.9C502.8 550.8 504.6 551.7 504.6 552.5C504.6 553.2 502.9 554.1 501.6 555.4C500.4 556.7 497.1 559.1 496.8 560.3C496.5 561.4 500.0 562.5 499.7 562.2C499.4 561.9 495.2 558.2 494.8 558.3C494.5 558.5 497.4 562.9 497.8 563.2C498.1 563.5 497.6 559.8 496.8 560.3C496.0 560.8 494.4 564.3 492.9 566.1C491.4 567.9 489.0 570.8 488.0 571.0C487.1 571.1 486.6 568.5 487.1 567.1C487.6 565.6 489.3 563.3 491.0 562.2C492.6 561.1 496.5 559.6 496.8 560.3C497.1 560.9 494.4 564.3 492.9 566.1C491.4 567.9 489.8 569.5 488.0 571.0C486.3 572.4 484.0 573.4 482.2 574.8C480.4 576.3 478.5 577.9 477.3 579.7C476.2 581.5 476.2 583.4 475.4 585.5C474.6 587.6 473.8 590.7 472.5 592.3C471.2 594.0 468.6 593.8 467.6 595.3C466.7 596.7 467.3 599.0 466.7 601.1C466.0 603.2 465.2 605.9 463.7 607.9C462.3 609.8 459.5 611.5 457.9 612.8C456.3 614.0 454.5 614.6 454.0 615.7C453.5 616.7 455.5 618.2 455.0 619.0C454.5 619.7 452.6 619.8 451.1 620.1C449.6 620.5 447.8 620.7 446.2 620.9C444.7 621.1 442.5 621.2 441.8 621.3M496.8 560.3C497.9 559.3 501.5 556.4 503.6 554.4C505.7 552.5 507.6 550.7 509.4 548.6C511.2 546.5 513.2 543.7 514.3 541.8C515.4 539.9 516.6 537.1 516.2 536.9C515.9 536.8 512.7 540.0 512.3 540.8C512.0 541.6 513.5 542.4 514.3 541.8C515.1 541.1 516.1 539.4 517.2 536.9C518.3 534.5 519.6 530.5 521.1 527.2C522.5 524.0 524.3 520.7 525.9 517.5C527.6 514.3 529.4 510.7 530.8 507.8C532.3 504.9 534.0 501.3 534.7 500.0M489.6 537.9C489.4 538.2 488.2 538.9 488.4 539.9C488.7 540.8 490.7 544.2 491.0 543.7C491.2 543.3 490.1 538.1 490.0 536.9" stroke="#ec5ec4" stroke-width="1.1" fill="none" stroke-linejoin="round"/>
<rect x="447.8" y="416.3" width="5.4" height="5.4" rx="1.5" fill="#e3409f" stroke="#3a1030" stroke-width="0.9"/>
<path d="M780.5 90.2l7.6 7.6M788.1 90.2l-7.6 7.6" stroke="#111" stroke-width="1.3" fill="none"/>
<rect x="657.400" y="112" width="130.200" height="16.600" rx="0.600" fill="none" stroke="#5a585c" stroke-width="1.200"/>
<rect x="660.100" y="117.600" width="5.600" height="5.600" fill="#e85ec2"/>
<text x="667.200" y="123.600" font-size="9.33" fill="#333" textLength="115.200" lengthAdjust="spacingAndGlyphs">vehicle_local_position/[x;y]</text>
<circle cx="787.7" cy="111.5" r="3.3" fill="#fefdfe" stroke="#333" stroke-width="0.9"/>
</svg>
<svg id="tr" style="left:0;top:0" width="1280" height="380" viewBox="0 0 1280 380">
<path d="M855.25 105.0V348.5M880.85 105.0V348.5M906.45 105.0V348.5M932.05 105.0V348.5M957.65 105.0V348.5M983.25 105.0V348.5M1008.85 105.0V348.5M1034.45 105.0V348.5M1060.05 105.0V348.5M1085.65 105.0V348.5M1111.25 105.0V348.5M1136.85 105.0V348.5M1162.45 105.0V348.5M1188.05 105.0V348.5M1213.65 105.0V348.5M1239.25 105.0V348.5M832.0 345.36H1263.8M832.0 339.02H1263.8M832.0 332.68H1263.8M832.0 326.34H1263.8M832.0 320.00H1263.8M832.0 313.66H1263.8M832.0 307.32H1263.8M832.0 300.98H1263.8M832.0 294.64H1263.8M832.0 288.30H1263.8M832.0 281.96H1263.8M832.0 275.62H1263.8M832.0 269.28H1263.8M832.0 262.94H1263.8M832.0 256.60H1263.8M832.0 250.26H1263.8M832.0 243.92H1263.8M832.0 237.58H1263.8M832.0 231.24H1263.8M832.0 224.90H1263.8M832.0 218.56H1263.8M832.0 212.22H1263.8M832.0 205.88H1263.8M832.0 199.54H1263.8M832.0 193.20H1263.8M832.0 186.86H1263.8M832.0 180.52H1263.8M832.0 174.18H1263.8M832.0 167.84H1263.8M832.0 161.50H1263.8M832.0 155.16H1263.8M832.0 148.82H1263.8M832.0 142.48H1263.8M832.0 136.14H1263.8M832.0 129.80H1263.8M832.0 123.46H1263.8M832.0 117.12H1263.8M832.0 110.78H1263.8" stroke="#d6d4d8" stroke-width="1" stroke-dasharray="1 1" fill="none"/>
<path d="M829 105.0V348.5M832.0 352.5H1263.8M855.25 352.5v4.2M880.85 352.5v3M906.45 352.5v6M932.05 352.5v3M957.65 352.5v4.2M983.25 352.5v3M1008.85 352.5v6M1034.45 352.5v3M1060.05 352.5v4.2M1085.65 352.5v3M1111.25 352.5v6M1136.85 352.5v3M1162.45 352.5v4.2M1188.05 352.5v3M1213.65 352.5v6M1239.25 352.5v3M829 345.36h-2.8M829 339.02h-2.8M829 332.68h-2.8M829 326.34h-2.8M829 320.00h-5.5M829 313.66h-2.8M829 307.32h-2.8M829 300.98h-2.8M829 294.64h-2.8M829 288.30h-5.5M829 281.96h-2.8M829 275.62h-2.8M829 269.28h-2.8M829 262.94h-2.8M829 256.60h-5.5M829 250.26h-2.8M829 243.92h-2.8M829 237.58h-2.8M829 231.24h-2.8M829 224.90h-5.5M829 218.56h-2.8M829 212.22h-2.8M829 205.88h-2.8M829 199.54h-2.8M829 193.20h-5.5M829 186.86h-2.8M829 180.52h-2.8M829 174.18h-2.8M829 167.84h-2.8M829 161.50h-5.5M829 155.16h-2.8M829 148.82h-2.8M829 142.48h-2.8M829 136.14h-2.8M829 129.80h-5.5M829 123.46h-2.8M829 117.12h-2.8M829 110.78h-2.8" stroke="#68666a" stroke-width="1.15" fill="none"/>
<text x="906.5" y="369" font-size="9.33" text-anchor="middle" fill="#333">360</text>
<text x="1008.9" y="369" font-size="9.33" text-anchor="middle" fill="#333">380</text>
<text x="1111.2" y="369" font-size="9.33" text-anchor="middle" fill="#333">400</text>
<text x="1213.7" y="369" font-size="9.33" text-anchor="middle" fill="#333">420</text>
<text x="819.800" y="323.4" font-size="9.33" text-anchor="end" fill="#333">-2</text>
<text x="819.800" y="291.7" font-size="9.33" text-anchor="end" fill="#333">-1</text>
<text x="819.800" y="260.0" font-size="9.33" text-anchor="end" fill="#333">0</text>
<text x="819.800" y="228.3" font-size="9.33" text-anchor="end" fill="#333">1</text>
<text x="819.800" y="196.6" font-size="9.33" text-anchor="end" fill="#333">2</text>
<text x="819.800" y="164.9" font-size="9.33" text-anchor="end" fill="#333">3</text>
<text x="819.800" y="133.2" font-size="9.33" text-anchor="end" fill="#333">4</text>
<text x="1004" y="97.100" font-size="9.33" text-anchor="middle" fill="#555">...</text>
<path d="M832.0 232.0L837.5 232.5L840.5 231.2L842.5 242.5L844.5 255.0L846.2 265.0L848.0 265.0L850.0 257.5L852.5 245.0L855.0 230.0L857.5 227.5L860.0 220.0L862.5 215.0L865.0 208.8L867.5 207.0L870.0 209.5L873.8 208.8L877.0 206.2L878.8 211.2L881.2 221.2L883.8 233.8L886.2 247.5L888.8 261.2L891.2 273.8L893.8 283.8L896.2 287.5L898.8 284.5L901.2 290.0L903.0 292.5L906.2 286.2L908.0 293.8L910.0 303.8L912.5 308.8L915.5 307.0L918.0 304.5L921.2 308.8L923.8 306.2L927.0 310.0L930.0 316.2L933.8 321.2L937.0 324.5L939.5 323.0L942.0 323.8L945.0 318.8L948.0 310.0L950.0 300.0L952.0 290.0L953.8 278.8L955.5 273.8L957.5 280.0L959.5 290.0L961.2 292.5L963.0 286.2L965.5 277.5L968.8 270.0L971.2 257.5L973.8 240.0L975.5 225.0L977.5 219.5L980.0 220.0L982.0 225.5L983.8 218.8L986.2 208.8L988.0 205.0L990.0 215.0L992.5 220.0L995.0 221.2L997.0 212.5L998.8 202.5L1001.2 192.5L1004.5 183.8L1007.5 180.5L1010.5 183.8L1013.8 188.8L1017.0 197.5L1019.5 207.5L1021.2 220.0L1022.5 238.8L1025.0 245.0L1027.5 252.5L1030.0 260.0L1032.0 272.5L1033.8 287.5L1035.0 300.0L1037.0 303.0L1038.8 297.5L1040.5 285.0L1042.5 276.2L1044.5 282.5L1046.2 295.0L1048.0 305.0L1050.0 308.8L1052.5 307.5L1054.5 300.0L1056.2 293.8L1058.8 291.2L1060.0 293.8L1062.5 288.8L1064.5 285.0L1066.2 292.5L1068.0 302.5L1070.0 310.0L1072.5 320.0L1075.0 330.0L1077.5 338.8L1079.5 345.0L1081.2 346.2L1083.0 341.2L1085.0 330.0L1087.5 315.0L1089.5 300.0L1091.0 285.0L1092.0 269.5L1093.0 255.0L1094.5 237.5L1097.0 222.5L1099.5 207.5L1102.0 197.5L1104.5 193.8L1106.2 186.2L1108.0 192.5L1110.0 188.8L1112.0 175.0L1114.5 162.5L1117.0 145.0L1118.8 132.5L1120.5 122.5L1122.5 117.5L1124.5 120.0L1126.2 126.2L1128.8 128.8L1131.2 125.0L1133.8 123.8L1136.2 116.2L1137.5 112.5L1139.5 117.5L1140.8 132.5L1142.0 155.0L1143.2 180.0L1143.2 195.0L1144.5 212.5L1146.2 230.0L1148.0 242.5L1150.5 251.2L1153.0 260.0L1155.5 266.2L1158.0 273.0L1161.2 270.0L1163.8 272.5L1167.0 273.0L1170.0 271.2L1172.5 275.0L1175.0 278.8L1177.5 285.0L1179.5 286.2L1181.2 282.5L1183.0 290.0L1185.0 297.5L1187.0 305.0L1188.8 311.2L1191.2 307.5L1193.0 300.0L1195.0 305.0L1197.0 310.0L1199.5 305.0L1201.2 300.0L1203.0 306.2L1205.0 315.0L1207.0 318.8L1208.8 313.8L1210.5 310.0L1212.5 316.2L1213.8 318.8L1215.5 310.0L1217.5 302.5L1219.5 298.8L1221.2 296.2L1223.0 300.0L1225.0 305.0L1227.0 315.0L1228.8 321.2L1231.2 325.0L1233.8 320.0L1236.2 318.8L1238.0 318.8L1240.0 315.0L1242.5 311.2L1245.0 305.0L1247.0 297.5L1249.5 290.0L1252.0 283.8L1254.5 280.0L1256.2 272.5L1258.0 260.0L1260.0 247.5L1262.0 235.0L1263.8 225.0L1265.0 220.0" stroke="#2f7cb8" stroke-width="1.250" fill="none" stroke-linejoin="round"/>
<path d="M832.0 213.8L835.0 212.5L837.5 210.0L839.5 211.5L842.5 208.8L845.0 209.5L847.5 205.5L850.5 203.2L853.0 207.5L855.5 216.2L857.5 212.0L860.0 217.5L862.5 227.5L866.2 240.0L870.0 253.8L873.8 267.5L877.5 281.2L881.2 297.5L885.0 310.0L888.0 317.0L891.2 317.0L895.0 311.2L898.8 305.0L902.5 297.5L905.5 300.5L908.8 295.0L911.2 286.2L913.8 287.5L917.5 283.0L920.0 282.5L922.5 287.5L925.0 293.0L927.5 292.0L930.0 287.5L932.5 278.8L935.0 266.2L937.5 252.5L940.0 237.5L942.5 225.0L944.5 215.0L947.0 211.2L948.8 202.5L951.2 192.5L953.8 181.2L954.5 177.0L956.2 180.0L958.0 191.2L960.0 198.8L962.0 193.8L963.8 181.2L966.2 176.2L968.8 178.8L971.2 178.8L973.8 181.2L976.2 185.0L978.8 195.0L982.5 208.8L986.2 212.5L988.8 220.0L991.2 222.5L993.8 213.8L996.2 208.8L998.8 211.2L1000.5 221.2L1003.0 235.0L1006.2 250.0L1008.8 262.5L1012.5 282.5L1016.2 305.0L1018.8 325.0L1021.2 340.0L1023.2 347.0L1026.2 345.0L1028.8 338.8L1032.0 340.0L1035.0 335.0L1037.5 327.5L1040.0 317.5L1042.5 307.5L1045.0 305.0L1047.5 303.8L1050.0 300.0L1052.5 293.8L1056.2 290.0L1060.0 290.0L1062.5 293.8L1065.0 293.8L1068.0 288.8L1071.2 280.0L1073.8 271.2L1076.2 257.5L1078.8 237.5L1081.2 212.5L1083.8 192.5L1086.2 170.0L1088.8 145.0L1090.8 132.5L1092.5 128.8L1095.0 125.0L1098.0 120.0L1100.0 117.5L1101.2 106.2L1103.0 105.0L1105.0 113.8L1106.2 125.0L1107.5 140.0L1108.8 152.5L1111.2 161.2L1113.8 166.2L1116.2 175.0L1118.8 185.0L1120.0 190.0L1122.5 201.2L1124.5 215.0L1126.2 230.0L1128.0 245.0L1130.0 262.5L1132.0 282.5L1134.5 302.5L1136.2 317.5L1138.0 328.8L1140.0 331.8L1143.0 330.0L1146.2 326.2L1148.8 317.5L1151.2 311.2L1154.5 306.2L1157.5 300.0L1160.5 293.8L1162.5 291.2L1164.5 295.0L1167.0 298.8L1170.0 301.2L1172.5 300.0L1174.5 303.8L1176.2 301.2L1178.0 307.5L1180.0 307.5L1182.5 303.8L1185.0 300.0L1187.0 293.8L1188.8 291.2L1190.5 297.5L1192.5 302.5L1194.5 297.5L1196.2 293.8L1198.0 300.0L1200.0 307.5L1202.0 311.2L1203.8 305.0L1205.0 307.5L1207.0 311.2L1209.5 307.5L1211.2 298.8L1213.0 292.5L1215.0 295.0L1217.0 297.5L1218.8 302.5L1220.5 300.0L1222.5 305.0L1225.0 310.0L1227.0 297.5L1228.8 287.5L1231.2 278.8L1233.0 277.5L1235.0 270.0L1237.5 260.0L1240.0 247.5L1242.5 236.2L1245.0 230.0L1247.5 221.2L1250.0 217.5L1252.0 210.0L1254.5 203.8L1257.0 196.2L1258.8 192.0L1261.2 191.2L1263.0 193.8L1264.5 195.0" stroke="#d2444a" stroke-width="1.250" fill="none" stroke-linejoin="round"/>
<path d="M1091.5 105V348.5" stroke="#e0787e" stroke-width="1.150"/>
<rect x="919" y="188.800" width="177" height="20.500" fill="#ffffff" opacity="0.680"/>
<text x="1094.5" y="196.6" font-size="8.6" text-anchor="end" fill="#d8555a" style="font-family:'DejaVu Sans Mono','Liberation Mono',monospace;white-space:pre" xml:space="preserve">4.032 : vehicle_local_position/vy</text>
<text x="1094.5" y="206.6" font-size="8.6" text-anchor="end" fill="#4f8fc2" style="font-family:'DejaVu Sans Mono','Liberation Mono',monospace;white-space:pre" xml:space="preserve">-0.399 : vehicle_local_position/vx</text>
<circle cx="1091.9" cy="128.8" r="1.7" fill="#7a1c20" stroke="#222" stroke-width="0.6"/>
<circle cx="1091.9" cy="269.3" r="1.7" fill="#1c4c7a" stroke="#222" stroke-width="0.6"/>
<path d="M1251.3 90.2l7.600 7.600M1258.900 90.2l-7.600 7.600" stroke="#111" stroke-width="1.3" fill="none"/>
<rect x="1137.5" y="111.8" width="121" height="31" rx="0.600" fill="none" stroke="#5a585c" stroke-width="1.200"/>
<rect x="1140.5" y="117.5" width="5.2" height="5.2" fill="#2f7cb8"/>
<rect x="1140.5" y="131.7" width="5.2" height="5.2" fill="#d2444a"/>
<text x="1147" y="123.6" font-size="9.33" fill="#333" textLength="106" lengthAdjust="spacingAndGlyphs">vehicle_local_position/vx</text>
<text x="1147" y="137.8" font-size="9.33" fill="#333" textLength="106" lengthAdjust="spacingAndGlyphs">vehicle_local_position/vy</text>
<circle cx="1258.6" cy="111.5" r="3.3" fill="#fefdfe" stroke="#333" stroke-width="0.9"/>
</svg>
<svg id="br" style="left:0;top:0" width="1280" height="680" viewBox="0 0 1280 680">
<path d="M864.40 407.0V649.8M889.40 407.0V649.8M914.40 407.0V649.8M939.40 407.0V649.8M964.40 407.0V649.8M989.40 407.0V649.8M1014.40 407.0V649.8M1039.40 407.0V649.8M1064.40 407.0V649.8M1089.40 407.0V649.8M1114.40 407.0V649.8M1139.40 407.0V649.8M1164.40 407.0V649.8M1189.40 407.0V649.8M1214.40 407.0V649.8M1239.40 407.0V649.8M841.0 641.38H1263.8M841.0 630.30H1263.8M841.0 619.23H1263.8M841.0 608.15H1263.8M841.0 597.08H1263.8M841.0 586.00H1263.8M841.0 574.93H1263.8M841.0 563.85H1263.8M841.0 552.78H1263.8M841.0 541.70H1263.8M841.0 530.62H1263.8M841.0 519.55H1263.8M841.0 508.48H1263.8M841.0 497.40H1263.8M841.0 486.33H1263.8M841.0 475.25H1263.8M841.0 464.18H1263.8M841.0 453.10H1263.8M841.0 442.03H1263.8M841.0 430.95H1263.8M841.0 419.88H1263.8M841.0 408.80H1263.8" stroke="#d6d4d8" stroke-width="1" stroke-dasharray="1 1" fill="none"/>
<path d="M838.7 407.0V649.8M841.0 653.2H1263.8M864.40 653.2v4.2M889.40 653.2v3M914.40 653.2v6M939.40 653.2v3M964.40 653.2v4.2M989.40 653.2v3M1014.40 653.2v6M1039.40 653.2v3M1064.40 653.2v4.2M1089.40 653.2v3M1114.40 653.2v6M1139.40 653.2v3M1164.40 653.2v4.2M1189.40 653.2v3M1214.40 653.2v6M1239.40 653.2v3M838.7 641.38h-3.2M838.7 630.30h-6M838.7 619.23h-3.2M838.7 608.15h-5M838.7 597.08h-3.2M838.7 586.00h-6M838.7 574.93h-3.2M838.7 563.85h-5M838.7 552.78h-3.2M838.7 541.70h-6M838.7 530.62h-3.2M838.7 519.55h-5M838.7 508.48h-3.2M838.7 497.40h-6M838.7 486.33h-3.2M838.7 475.25h-5M838.7 464.18h-3.2M838.7 453.10h-6M838.7 442.03h-3.2M838.7 430.95h-5M838.7 419.88h-3.2M838.7 408.80h-6" stroke="#68666a" stroke-width="1.15" fill="none"/>
<text x="914.4" y="669.8" font-size="9.33" text-anchor="middle" fill="#333">360</text>
<text x="1014.4" y="669.8" font-size="9.33" text-anchor="middle" fill="#333">380</text>
<text x="1114.4" y="669.8" font-size="9.33" text-anchor="middle" fill="#333">400</text>
<text x="1214.4" y="669.8" font-size="9.33" text-anchor="middle" fill="#333">420</text>
<text x="828.5" y="633.7" font-size="9.33" text-anchor="end" fill="#333">-0.4</text>
<text x="828.5" y="589.4" font-size="9.33" text-anchor="end" fill="#333">-0.2</text>
<text x="828.5" y="545.1" font-size="9.33" text-anchor="end" fill="#333">0</text>
<text x="828.5" y="500.8" font-size="9.33" text-anchor="end" fill="#333">0.2</text>
<text x="828.5" y="456.5" font-size="9.33" text-anchor="end" fill="#333">0.4</text>
<text x="828.5" y="412.2" font-size="9.33" text-anchor="end" fill="#333">0.6</text>
<text x="1004" y="398.100" font-size="9.33" text-anchor="middle" fill="#555">...</text>
<path d="M841.5 542.1L842.8 545.1L844.0 532.9L845.2 534.8L846.5 522.1L847.8 491.0L849.0 563.2L850.2 525.5L851.5 539.3L852.8 518.9L854.0 528.3L855.2 519.8L856.5 495.7L857.8 543.9L859.0 517.3L860.2 529.5L861.5 491.4L862.8 507.6L864.0 512.4L865.2 515.3L866.5 523.9L867.8 512.3L869.0 477.8L870.2 554.4L871.5 524.4L872.8 515.1L874.0 505.3L875.2 544.2L876.5 513.5L877.8 538.3L879.0 507.5L880.2 523.7L881.5 525.7L882.8 531.7L884.0 541.1L885.2 535.6L886.5 532.9L887.8 506.3L889.0 558.8L890.2 552.1L891.5 522.0L892.8 545.7L894.0 535.2L895.2 516.6L896.5 540.6L897.8 542.7L899.0 505.6L900.2 538.2L901.5 525.9L902.8 523.4L904.0 541.3L905.2 527.4L906.5 517.5L907.8 551.6L909.0 504.1L910.2 567.5L911.5 543.6L912.8 527.7L914.0 528.2L915.2 508.2L916.5 534.5L917.8 497.5L919.0 550.0L920.2 506.3L921.5 517.9L922.8 520.5L924.0 543.0L925.2 507.5L926.5 528.3L927.8 543.0L929.0 555.5L930.2 545.7L931.5 515.0L932.8 571.9L934.0 561.4L935.2 531.4L936.5 538.2L937.8 560.3L939.0 549.1L940.2 537.8L941.5 540.6L942.8 538.5L944.0 553.9L945.2 528.9L946.5 536.5L947.8 531.8L949.0 478.7L950.2 563.2L951.5 530.2L952.8 540.2L954.0 494.4L955.2 539.9L956.5 545.9L957.8 496.2L959.0 546.5L960.2 543.4L961.5 500.5L962.8 570.0L964.0 516.6L965.2 525.4L966.5 528.2L967.8 532.0L969.0 520.5L970.2 486.6L971.5 580.7L972.8 526.5L974.0 543.3L975.2 517.8L976.5 513.4L977.8 550.6L979.0 544.0L980.2 473.5L981.5 567.5L982.8 532.7L984.0 521.4L985.2 523.0L986.5 550.9L987.8 495.3L989.0 557.6L990.2 487.3L991.5 526.6L992.8 532.7L994.0 538.8L995.2 533.4L996.5 529.9L997.8 489.6L999.0 563.2L1000.2 541.8L1001.5 530.1L1002.8 544.0L1004.0 543.4L1005.2 536.1L1006.5 550.2L1007.8 540.5L1009.0 564.2L1010.2 506.3L1011.5 576.3L1012.8 527.6L1014.0 531.6L1015.2 541.1L1016.5 518.5L1017.8 538.6L1019.0 550.3L1020.2 504.2L1021.5 528.0L1022.8 538.0L1024.0 537.4L1025.2 537.0L1026.5 529.2L1027.8 501.9L1029.0 569.7L1030.2 529.6L1031.5 569.6L1032.8 524.3L1034.0 531.5L1035.2 533.7L1036.5 530.6L1037.8 534.4L1039.0 500.8L1040.2 544.1L1041.5 546.7L1042.8 499.7L1044.0 567.5L1045.2 551.2L1046.5 550.9L1047.8 560.9L1049.0 517.0L1050.2 553.9L1051.5 537.3L1052.8 555.2L1054.0 550.9L1055.2 507.1L1056.5 565.0L1057.8 510.7L1059.0 556.5L1060.2 510.9L1061.5 548.0L1062.8 510.6L1064.0 563.2L1065.2 539.9L1066.5 543.5L1067.8 535.8L1069.0 538.2L1070.2 558.6L1071.5 544.9L1072.8 535.2L1074.0 573.2L1075.2 506.3L1076.5 574.1L1077.8 522.6L1079.0 547.6L1080.2 543.0L1081.5 535.5L1082.8 544.8L1083.7 501.1L1084.7 493.1L1085.6 585.0L1086.6 513.9L1087.5 488.8L1088.5 639.7L1089.4 606.5L1090.4 549.5L1091.3 477.8L1092.3 611.3L1093.2 569.5L1094.2 503.5L1095.1 589.7L1096.1 573.7L1097.0 497.6L1098.0 436.3L1098.9 602.5L1099.9 534.6L1100.8 475.1L1101.8 625.7L1102.7 499.8L1103.7 440.6L1104.6 633.2L1105.6 530.9L1106.5 571.2L1107.5 420.9L1108.4 620.0L1109.4 462.5L1110.3 642.8L1111.3 504.9L1112.2 510.5L1113.2 555.4L1114.1 504.4L1115.1 453.8L1116.0 585.0L1117.0 492.9L1117.9 465.6L1118.9 528.2L1119.8 462.3L1120.8 560.5L1121.7 502.4L1122.7 503.1L1123.6 516.3L1124.6 529.6L1125.5 502.1L1126.5 458.1L1127.4 585.0L1128.4 538.1L1129.3 523.5L1130.3 532.2L1131.2 460.3L1132.2 539.5L1133.1 437.3L1134.1 491.3L1135.0 431.9L1136.0 593.8L1136.9 435.4L1137.9 542.7L1138.8 418.8L1139.8 598.2L1140.7 502.1L1141.7 544.7L1142.6 573.4L1143.6 517.7L1144.5 553.4L1145.5 475.6L1146.4 571.9L1147.4 515.0L1148.3 531.9L1149.3 552.8L1150.2 491.9L1151.2 536.3L1152.1 543.5L1153.4 534.5L1154.6 523.6L1155.9 541.3L1157.1 522.7L1158.4 482.2L1159.6 563.2L1160.9 528.3L1162.1 548.4L1163.4 518.4L1164.6 528.6L1165.9 527.4L1167.1 516.9L1168.4 543.2L1169.6 514.6L1170.9 549.4L1172.1 497.5L1173.4 571.9L1174.6 511.4L1175.9 508.9L1177.1 547.0L1178.4 515.6L1179.6 503.0L1180.9 528.8L1182.1 535.2L1183.4 524.7L1184.6 501.9L1185.9 567.5L1187.1 545.3L1188.4 540.3L1189.6 559.2L1190.9 541.6L1192.1 546.9L1193.4 503.0L1194.6 570.7L1195.9 545.1L1197.1 527.4L1198.4 488.8L1199.6 578.5L1200.9 484.8L1202.1 557.2L1203.4 558.5L1204.6 494.6L1205.9 552.8L1207.1 548.4L1208.4 511.8L1209.6 540.2L1210.9 466.9L1212.1 563.2L1213.4 529.6L1214.6 523.2L1215.9 533.5L1217.1 513.2L1218.4 517.9L1219.6 502.6L1220.9 518.1L1222.1 493.1L1223.4 558.8L1224.6 502.3L1225.9 503.6L1227.1 554.7L1228.4 507.5L1229.6 522.2L1230.9 477.0L1232.1 538.9L1233.4 509.3L1234.6 547.0L1235.9 467.8L1237.1 563.2L1238.4 529.8L1239.6 479.5L1240.9 563.9L1242.1 513.3L1243.4 517.3L1244.6 559.5L1245.9 553.4L1247.1 492.2L1248.4 539.9L1249.6 484.4L1250.9 592.5L1252.1 533.1L1253.4 527.5L1254.6 582.5L1255.9 547.4L1257.1 482.2L1258.4 576.3L1259.6 572.6L1260.9 538.8L1262.1 565.4L1263.4 524.5L1263.8 453.8" stroke="#2f7cb8" stroke-width="1.2" fill="none" stroke-linejoin="round"/>
<path d="M1095.5 407V649.8" stroke="#e0787e" stroke-width="1.150"/>
<rect x="919" y="525.2" width="185" height="10.800" fill="#ffffff" opacity="0.62"/>
<text x="1102" y="533.8" font-size="8.6" text-anchor="end" fill="#5b98c8" style="font-family:'DejaVu Sans Mono','Liberation Mono',monospace;white-space:pre" xml:space="preserve">0.050 : vehicle_local_position/vz</text>
<circle cx="1095.500" cy="530.600" r="1.700" fill="#1c4c7a" stroke="#222" stroke-width="0.6"/>
<path d="M1251.300 391.200l7.600 7.600M1258.900 391.200l-7.600 7.600" stroke="#111" stroke-width="1.3" fill="none"/>
<rect x="1137.500" y="413.800" width="121" height="17" rx="0.600" fill="none" stroke="#5a585c" stroke-width="1.200"/>
<rect x="1140.500" y="419.300" width="5.200" height="5.200" fill="#2f7cb8"/>
<text x="1147" y="425.600" font-size="9.33" fill="#333" textLength="106" lengthAdjust="spacingAndGlyphs">vehicle_local_position/vz</text>
<circle cx="1258.600" cy="413.500" r="3.300" fill="#fefdfe" stroke="#333" stroke-width="0.9"/>
</svg>

<div class="abs" style="left:331px;top:685.100px;width:71.600px;height:21.400px;background:#fefdfe;border:1px solid #8e8c90;border-radius:1.500px"></div>
<div class="lbl" style="left:347px;top:692px;color:#3a3a3a">396.242</div>
<svg style="left:405px;top:684px" width="875" height="26" viewBox="405 684 875 26">
 <path d="M415.800 692.800h4.200c2.200 0 3.500 1.500 3.500 3.500s-1.300 3.500-3.500 3.500h-5.400c-2.200 0-3.500-1.500-3.500-3.500 0-1.800 1.100-3.200 2.900-3.450" fill="none" stroke="#111" stroke-width="1.300"/>
 <path d="M416.700 690.200l-2.600 2.500 2.600 2.500" fill="none" stroke="#111" stroke-width="1.300"/>
 <path d="M436.700 690v12.300l10.200-6.150z" fill="#111"/>
 <rect x="455.500" y="692.600" width="612.500" height="6.800" rx="3.400" fill="#fefdfe" stroke="#8e8c90" stroke-width="0.900"/>
 <rect x="455.500" y="692.600" width="487" height="6.800" rx="3.400" fill="#1a76e6" stroke="#1660c0" stroke-width="0.600"/>
 <rect x="939" y="690.300" width="6.600" height="11.400" rx="3.200" fill="#8a888c" stroke="#6a686c" stroke-width="0.800"/>
</svg>
<div class="lbl" style="left:1076px;top:691.800px;color:#2e2e2e;font-weight:bold">Speed:</div>
<div class="abs" style="left:1116.500px;top:685.500px;width:43.500px;height:21.500px;background:#fefdfe;border:1px solid #8e8c90;border-radius:1.500px"></div>
<div class="lbl" style="left:1122px;top:692px;color:#3a3a3a">1.0</div>
<div class="lbl" style="left:1164.500px;top:691.800px;color:#2e2e2e;font-weight:bold">Step size:</div>
<div class="abs" style="left:1220px;top:685.500px;width:50px;height:21.500px;background:#fefdfe;border:1px solid #8e8c90;border-radius:1.500px"></div>
<div class="lbl" style="left:1226px;top:692px;color:#3a3a3a">0.00</div>
<svg style="left:1140px;top:684px" width="140" height="26" viewBox="1140 684 140 26">
 <g fill="#e4e2e5" stroke="#8e8c90" stroke-width="0.800">
  <rect x="1148.500" y="686" width="11" height="10"/><rect x="1148.500" y="696" width="11" height="10.500"/>
  <rect x="1258.500" y="686" width="11" height="10"/><rect x="1258.500" y="696" width="11" height="10.500"/>
 </g>
 <path d="M1151 693.500h6l-3-3.500zM1151 699h6l-3 3.500zM1261 693.500h6l-3-3.500zM1261 699h6l-3 3.500z" fill="#5a5a5a"/>
</svg>
<!-- window below -->
<div class="abs" style="left:0;top:716.300px;width:1280px;height:3.700px;background:#d7d5d8;overflow:hidden">
 <div class="abs" style="left:0;top:0;width:1280px;height:0.800px;background:#e6e4e7"></div>
 <div class="abs" style="left:2px;top:1.400px;width:186px;height:3px;background:repeating-linear-gradient(90deg,#b9b7ba 0,#b9b7ba 1px,transparent 1px,transparent 18.800px)"></div>
 <div class="abs" style="left:491.800px;top:1.200px;width:789px;height:3px;background:#0b0b0b"></div>
 <div class="lbl" style="left:265px;top:0.800px;color:#2a2a2a;font-size:9.500px">Relative to:&nbsp;&nbsp;Selection Area</div>
</div>

</div></body></html>
